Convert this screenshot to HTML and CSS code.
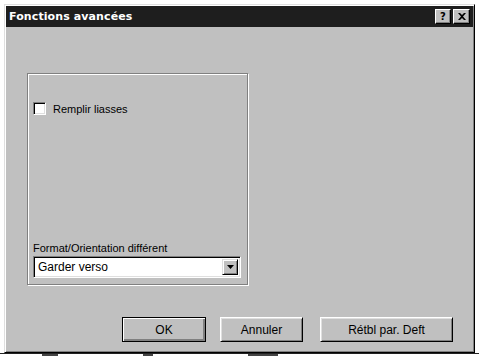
FILE: index.html
```html
<!DOCTYPE html>
<html lang="fr">
<head>
  <meta charset="UTF-8">
  <meta name="viewport" content="width=device-width, initial-scale=1.0">
  <title>Fonctions avancées</title>
  <link rel="stylesheet" href="styles.css">
</head>
<body>
  <div class="dialog">
    <div class="titlebar">
      <div class="title">Fonctions avancées</div>
      <div class="title-buttons">
        <div class="tbtn">?</div>
        <div class="tbtn tbtn-close">
          <svg width="8" height="7" viewBox="0 0 8 7">
            <path d="M0 0h2l2 2 2-2h2L5 3.5 8 7H6L4 5 2 7H0l3-3.5z" fill="#000"/>
          </svg>
        </div>
      </div>
    </div>

    <div class="content">
      <div class="groupbox">
        <div class="check-row">
          <div class="checkbox"></div>
          <span>Remplir liasses</span>
        </div>
        <div class="spacer"></div>
        <div class="field-label">Format/Orientation différent</div>
        <div class="combo">
          <div class="combo-text">Garder verso</div>
          <div class="combo-arrow">
            <svg width="7" height="4" viewBox="0 0 7 4"><path d="M0 0h7L3.5 4z" fill="#000"/></svg>
          </div>
        </div>
      </div>

      <div class="buttons">
        <div class="btn btn-default"><span>OK</span></div>
        <div class="btn btn-cancel"><span>Annuler</span></div>
        <div class="btn btn-wide"><span>Rétbl par. Deft</span></div>
      </div>
    </div>
  </div>

  <!-- fenetre derriere, presque entierement cachee -->
  <div class="behind">
    <i class="tick tick-1"></i>
    <i class="tick tick-2"></i>
    <i class="tick tick-3"></i>
  </div>
</body>
</html>
```

FILE: styles.css
```css
body {
  margin: 0;
  background: #fff;
  font-family: "Liberation Sans", Arial, sans-serif;
  font-size: 11px;
  color: #000;
  overflow: hidden;
}
.dialog {
  margin: 4px 0 0 4px;
  width: 471px;
  height: 349px;
  box-sizing: border-box;
  background: #c0c0c0;
  border: 1px solid;
  border-color: #dfdfdf #000 #000 #dfdfdf;
  box-shadow: inset 1px 1px #fff, inset -1px -1px #808080;
  padding: 1px;
}
.titlebar {
  height: 21px;
  background: #1e1e1e;
  display: flex;
  align-items: center;
  justify-content: space-between;
  padding: 0 3px 0 3px;
}
.title {
  color: #fff;
  font-family: "DejaVu Sans", Verdana, sans-serif;
  font-weight: bold;
  font-size: 11px;
  letter-spacing: 0.1px;
}
.title-buttons {
  display: flex;
  gap: 2px;
}
.tbtn {
  width: 16px;
  height: 15px;
  box-sizing: border-box;
  background: #c0c0c0;
  border: 1px solid;
  border-color: #fff #000 #000 #fff;
  box-shadow: inset -1px -1px #808080;
  display: flex;
  align-items: center;
  justify-content: center;
  font-family: "DejaVu Sans", sans-serif;
  font-weight: bold;
  font-size: 10px;
  line-height: 1;
}
.tbtn-close {
  width: 17px;
}
.content {
  padding: 46px 0 0 21px;
}
.groupbox {
  width: 221px;
  height: 212px;
  box-sizing: border-box;
  border: 1px solid #808080;
  box-shadow: inset 1px 1px #fff, 1px 1px #fff;
  padding: 28px 0 6px 5px;
  display: flex;
  flex-direction: column;
}
.check-row {
  display: flex;
  align-items: center;
  gap: 7px;
  height: 13px;
}
.checkbox {
  width: 13px;
  height: 13px;
  box-sizing: border-box;
  background: #fff;
  border: 1px solid;
  border-color: #808080 #fff #fff #808080;
  box-shadow: inset 1px 1px #000, inset -1px -1px #dfdfdf;
}
.spacer {
  flex: 1;
}
.field-label {
  line-height: 13px;
  margin-bottom: 1px;
}
.combo {
  width: 208px;
  height: 22px;
  box-sizing: border-box;
  background: #fff;
  border: 1px solid;
  border-color: #808080 #fff #fff #808080;
  box-shadow: inset 1px 1px #000, inset -1px -1px #dfdfdf;
  padding: 2px;
  display: flex;
  align-items: center;
}
.combo-text {
  flex: 1;
  padding-left: 2px;
  font-size: 12px;
}
.combo-arrow {
  width: 16px;
  height: 16px;
  box-sizing: border-box;
  background: #c0c0c0;
  border: 1px solid;
  border-color: #dfdfdf #000 #000 #dfdfdf;
  box-shadow: inset 1px 1px #fff, inset -1px -1px #808080;
  display: flex;
  align-items: center;
  justify-content: center;
}
.buttons {
  display: flex;
  margin-top: 32px;
  padding-left: 95px;
}
.btn {
  height: 25px;
  box-sizing: border-box;
  border: 1px solid;
  border-color: #fff #000 #000 #fff;
  box-shadow: inset 1px 1px #dfdfdf, inset -1px -1px #808080;
  display: flex;
  align-items: center;
  justify-content: center;
  font-size: 12px;
}
.btn-default {
  width: 84px;
  border: 1px solid #000;
  box-shadow: inset 1px 1px #fff, inset -1px -1px #808080, inset -2px -2px #808080;
}
.btn-cancel {
  width: 83px;
  margin-left: 14px;
}
.btn-wide {
  width: 133px;
  margin-left: 17px;
}
.behind {
  height: 3px;
  border-top: 1px solid #222;
  display: flex;
}
.tick {
  height: 2px;
  background: #444;
}
.tick-1 {
  width: 16px;
  margin-left: 42px;
}
.tick-2 {
  width: 10px;
  margin-left: 85px;
}
.tick-3 {
  width: 30px;
  margin-left: 95px;
}
```
